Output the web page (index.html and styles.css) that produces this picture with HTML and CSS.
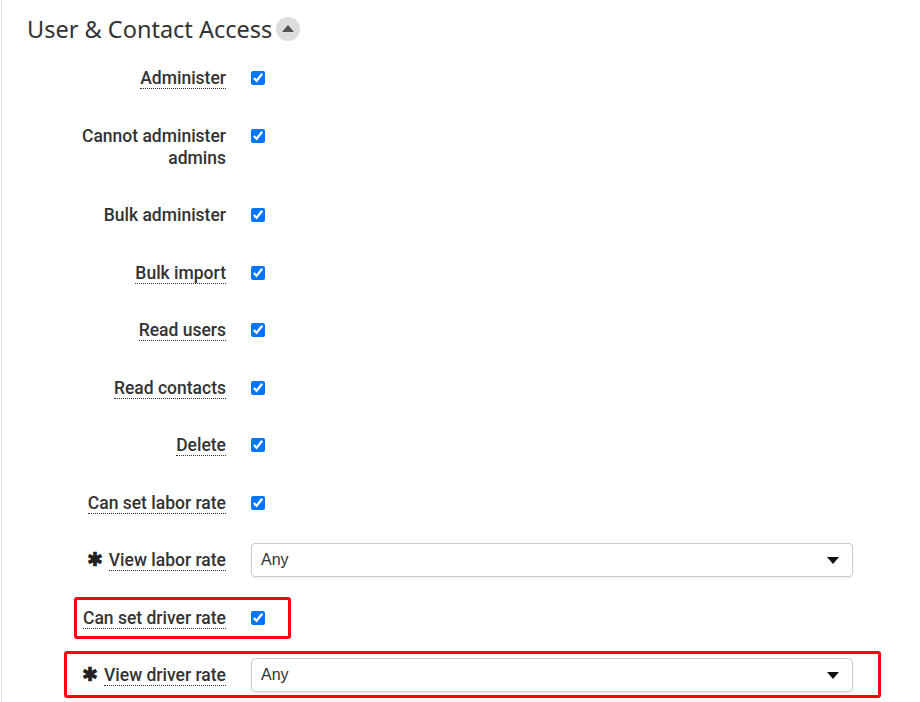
FILE: index.html
```html
<!DOCTYPE html>
<html lang="en">
<head>
    <meta charset="UTF-8">
    <meta name="viewport" content="width=device-width, initial-scale=1.0">
    <title>User &amp; Contact Access</title>
    <link rel="stylesheet" href="styles.css">
</head>
<body>
    <div class="panel">
        <h2 class="section-title">
            User &amp; Contact Access
            <span class="toggle"><svg width="12" height="7" viewBox="0 0 12 7"><path d="M0 7 L6 0 L12 7 Z" fill="#555"/></svg></span>
        </h2>

        <div class="fields">
            <div class="row">
                <label class="label"><span class="term">Administer</span></label>
                <div class="control"><input type="checkbox" checked></div>
            </div>
            <div class="row">
                <label class="label"><span>Cannot administer admins</span></label>
                <div class="control"><input type="checkbox" checked></div>
            </div>
            <div class="row">
                <label class="label"><span>Bulk administer</span></label>
                <div class="control"><input type="checkbox" checked></div>
            </div>
            <div class="row">
                <label class="label"><span class="term">Bulk import</span></label>
                <div class="control"><input type="checkbox" checked></div>
            </div>
            <div class="row">
                <label class="label"><span class="term">Read users</span></label>
                <div class="control"><input type="checkbox" checked></div>
            </div>
            <div class="row">
                <label class="label"><span class="term">Read contacts</span></label>
                <div class="control"><input type="checkbox" checked></div>
            </div>
            <div class="row">
                <label class="label"><span class="term">Delete</span></label>
                <div class="control"><input type="checkbox" checked></div>
            </div>
            <div class="row">
                <label class="label"><span class="term">Can set labor rate</span></label>
                <div class="control"><input type="checkbox" checked></div>
            </div>
            <div class="row">
                <label class="label"><span class="req">&#10033;</span><span class="term">View labor rate</span></label>
                <div class="control">
                    <div class="select"><span>Any</span><i class="caret"></i></div>
                </div>
            </div>
            <div class="row">
                <label class="label"><span class="term">Can set driver rate</span></label>
                <div class="control"><input type="checkbox" checked></div>
                <div class="mark mark-small"></div>
            </div>
            <div class="row">
                <label class="label"><span class="req">&#10033;</span><span class="term">View driver rate</span></label>
                <div class="control">
                    <div class="select"><span>Any</span><i class="caret"></i></div>
                </div>
                <div class="mark mark-wide"></div>
            </div>
        </div>
    </div>
</body>
</html>
```

FILE: styles.css
```css
body {
    margin: 0;
    background-color: #fff;
    font-family: Roboto, "Liberation Sans", sans-serif;
    color: #333;
}
.panel {
    border-left: 1px solid #e3e3e3;
    margin-left: 1px;
    padding: 14px 0 0 25px;
    min-height: 702px;
    box-sizing: border-box;
}
.section-title {
    margin: 0 0 23px;
    font-family: "Noto Sans", sans-serif;
    font-weight: normal;
    font-size: 23.5px;
    line-height: 30px;
    color: #333;
    display: flex;
    align-items: center;
    gap: 4px;
}
.toggle {
    width: 24px;
    height: 24px;
    border-radius: 50%;
    background-color: #ddd;
    display: inline-flex;
    align-items: center;
    justify-content: center;
}
.toggle svg {
    margin-top: -2px;
}
.row {
    position: relative;
    display: grid;
    grid-template-columns: 148px 602px;
    column-gap: 25px;
    padding: 0 0 35.5px 51px;
}
.label {
    text-align: right;
    font-size: 17.5px;
    font-weight: 500;
    line-height: 22px;
}
.label .term {
    border-bottom: 1px dotted #333;
}
.label .req {
    margin-right: 6px;
    font-size: 19px;
    font-weight: bold;
    color: #222;
}
.control {
    display: flex;
    align-items: flex-start;
}
.control input[type="checkbox"] {
    margin: 4px 0 0 0;
    width: 14px;
    height: 14px;
}
.select {
    flex: 1;
    height: 34px;
    margin: -6px 0 -6px;
    box-sizing: border-box;
    border: 1px solid #ccc;
    border-radius: 4px;
    box-shadow: 0 1px 2px rgba(0,0,0,0.08);
    display: flex;
    align-items: center;
    justify-content: space-between;
    padding: 0 13px 0 9px;
    font-family: "Liberation Sans", Arial, sans-serif;
    font-size: 16px;
    color: #333;
}
.caret {
    width: 0;
    height: 0;
    border-left: 6px solid transparent;
    border-right: 6px solid transparent;
    border-top: 7px solid #111;
}
.mark {
    position: absolute;
    box-sizing: border-box;
    border: 3px solid #ff0010;
    border-radius: 3px;
    pointer-events: none;
}
.mark-small {
    left: 47px;
    top: -10px;
    width: 217px;
    height: 42px;
}
.mark-wide {
    left: 37px;
    top: -13px;
    width: 817px;
    height: 47px;
}
```
